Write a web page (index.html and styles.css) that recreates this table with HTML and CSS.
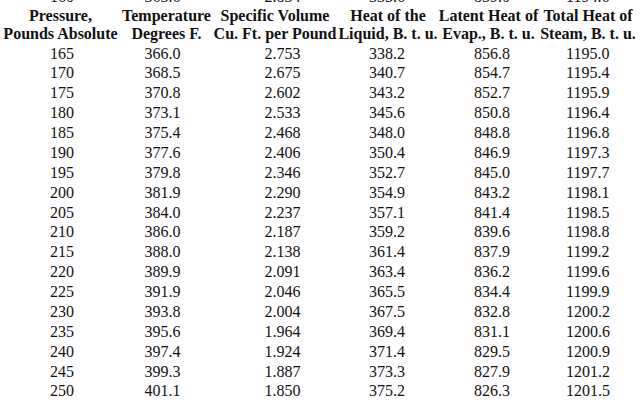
FILE: index.html
```html
<!DOCTYPE html>
<html>
<head>
<meta charset="utf-8">
<link rel="stylesheet" href="styles.css">
</head>
<body>
<table class="steam">
  <colgroup>
    <col class="w1"><col class="w2"><col class="w3"><col class="w4"><col class="w5"><col class="w6">
  </colgroup>
  <tbody>
    <tr class="cut"><td class="c1">160</td><td class="c2">363.6</td><td class="c3">2.834</td><td class="c4">335.6</td><td class="c5">859.0</td><td class="c6">1194.6</td></tr>
    <tr class="head">
      <th>Pressure,<br>Pounds Absolute</th>
      <th>Temperature<br>Degrees F.</th>
      <th>Specific Volume<br>Cu. Ft. per Pound</th>
      <th>Heat of the<br>Liquid, B. t. u.</th>
      <th>Latent Heat of<br>Evap., B. t. u.</th>
      <th>Total Heat of<br>Steam, B. t. u.</th>
    </tr>
    <tr><td class="c1">165</td><td class="c2">366.0</td><td class="c3">2.753</td><td class="c4">338.2</td><td class="c5">856.8</td><td class="c6">1195.0</td></tr>
    <tr><td class="c1">170</td><td class="c2">368.5</td><td class="c3">2.675</td><td class="c4">340.7</td><td class="c5">854.7</td><td class="c6">1195.4</td></tr>
    <tr><td class="c1">175</td><td class="c2">370.8</td><td class="c3">2.602</td><td class="c4">343.2</td><td class="c5">852.7</td><td class="c6">1195.9</td></tr>
    <tr><td class="c1">180</td><td class="c2">373.1</td><td class="c3">2.533</td><td class="c4">345.6</td><td class="c5">850.8</td><td class="c6">1196.4</td></tr>
    <tr><td class="c1">185</td><td class="c2">375.4</td><td class="c3">2.468</td><td class="c4">348.0</td><td class="c5">848.8</td><td class="c6">1196.8</td></tr>
    <tr><td class="c1">190</td><td class="c2">377.6</td><td class="c3">2.406</td><td class="c4">350.4</td><td class="c5">846.9</td><td class="c6">1197.3</td></tr>
    <tr><td class="c1">195</td><td class="c2">379.8</td><td class="c3">2.346</td><td class="c4">352.7</td><td class="c5">845.0</td><td class="c6">1197.7</td></tr>
    <tr><td class="c1">200</td><td class="c2">381.9</td><td class="c3">2.290</td><td class="c4">354.9</td><td class="c5">843.2</td><td class="c6">1198.1</td></tr>
    <tr><td class="c1">205</td><td class="c2">384.0</td><td class="c3">2.237</td><td class="c4">357.1</td><td class="c5">841.4</td><td class="c6">1198.5</td></tr>
    <tr><td class="c1">210</td><td class="c2">386.0</td><td class="c3">2.187</td><td class="c4">359.2</td><td class="c5">839.6</td><td class="c6">1198.8</td></tr>
    <tr><td class="c1">215</td><td class="c2">388.0</td><td class="c3">2.138</td><td class="c4">361.4</td><td class="c5">837.9</td><td class="c6">1199.2</td></tr>
    <tr><td class="c1">220</td><td class="c2">389.9</td><td class="c3">2.091</td><td class="c4">363.4</td><td class="c5">836.2</td><td class="c6">1199.6</td></tr>
    <tr><td class="c1">225</td><td class="c2">391.9</td><td class="c3">2.046</td><td class="c4">365.5</td><td class="c5">834.4</td><td class="c6">1199.9</td></tr>
    <tr><td class="c1">230</td><td class="c2">393.8</td><td class="c3">2.004</td><td class="c4">367.5</td><td class="c5">832.8</td><td class="c6">1200.2</td></tr>
    <tr><td class="c1">235</td><td class="c2">395.6</td><td class="c3">1.964</td><td class="c4">369.4</td><td class="c5">831.1</td><td class="c6">1200.6</td></tr>
    <tr><td class="c1">240</td><td class="c2">397.4</td><td class="c3">1.924</td><td class="c4">371.4</td><td class="c5">829.5</td><td class="c6">1200.9</td></tr>
    <tr><td class="c1">245</td><td class="c2">399.3</td><td class="c3">1.887</td><td class="c4">373.3</td><td class="c5">827.9</td><td class="c6">1201.2</td></tr>
    <tr><td class="c1">250</td><td class="c2">401.1</td><td class="c3">1.850</td><td class="c4">375.2</td><td class="c5">826.3</td><td class="c6">1201.5</td></tr>
  </tbody>
</table>
</body>
</html>
```
FILE: styles.css
```css
html, body {
  margin: 0;
  padding: 0;
  background: #ffffff;
  overflow: hidden;
}

body {
  font-family: "Liberation Serif", "Times New Roman", serif;
  font-size: 16px;
  color: #111111;
}

.steam {
  table-layout: fixed;
  width: 637px;
  border-collapse: collapse;
  border-spacing: 0;
  margin-top: -13px;
}

.w1 { width: 121px; }
.w2 { width: 91px; }
.w3 { width: 126px; }
.w4 { width: 100px; }
.w5 { width: 101px; }
.w6 { width: 98px; }

.steam td {
  padding: 0;
  line-height: 19.88px;
  text-align: left;
  white-space: nowrap;
}

.steam .cut td {
  line-height: 19.6px;
}

.steam th {
  padding: 0 0 1px 0;
  font-weight: bold;
  line-height: 18px;
  text-align: center;
  white-space: nowrap;
}

.steam td.c1 { padding-left: 50px; }
.steam td.c2 { padding-left: 23.5px; }
.steam td.c3 { padding-left: 52.5px; }
.steam td.c4 { padding-left: 31px; }
.steam td.c5 { padding-left: 36px; }
.steam td.c6 { padding-left: 27px; }
```
